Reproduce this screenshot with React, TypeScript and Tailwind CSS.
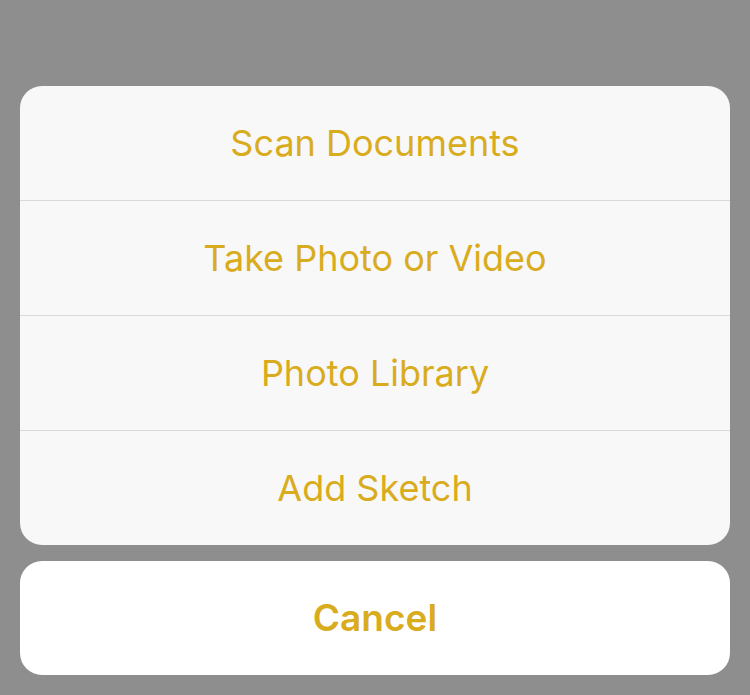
const items = ['Scan Documents', 'Take Photo or Video', 'Photo Library', 'Add Sketch'];

export default function App() {
  return (
    <div
      className="flex h-[695px] w-[750px] flex-col justify-end bg-[#8e8e8e] px-5 pb-5"
      style={{ fontFamily: 'Inter, "Noto Sans", sans-serif' }}
    >
      <div className="flex flex-col overflow-hidden rounded-[22px] bg-[#f8f8f8]">
        {items.map((label, i) => (
          <button
            key={label}
            type="button"
            className={`flex items-center justify-center text-[36px] text-[#d9ac1e] ${
              i > 0 ? 'h-[115px] border-t border-[#d9d9d9]' : 'h-[114px]'
            }`}
          >
            {label}
          </button>
        ))}
      </div>
      <button
        type="button"
        className="mt-4 flex h-[114px] items-center justify-center rounded-[22px] bg-white text-[37px] font-semibold text-[#d9ac1e]"
      >
        Cancel
      </button>
    </div>
  );
}
